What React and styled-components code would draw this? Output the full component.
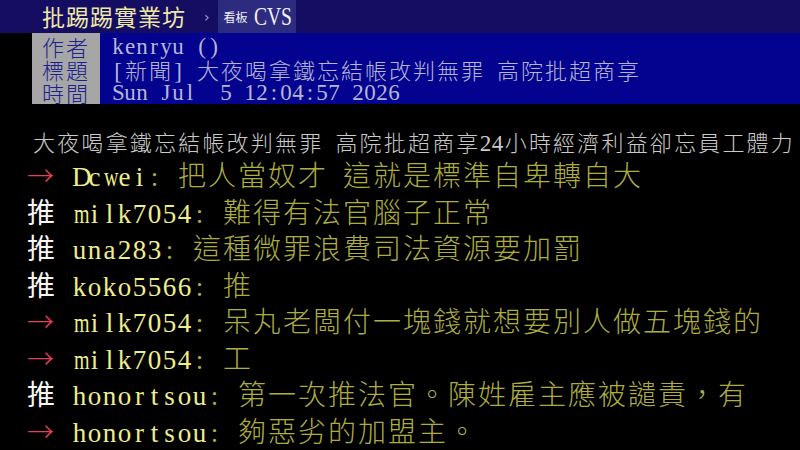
import React from 'react';
import styled, { createGlobalStyle } from 'styled-components';

const CJK = `"Noto Sans CJK TC", "Noto Sans CJK SC", sans-serif`;
const SERIF = `"Liberation Serif", "Noto Sans CJK TC", serif`;

const GlobalStyle = createGlobalStyle`
  html, body {
    margin: 0;
    padding: 0;
    background: #000;
  }
`;

const Page = styled.div`
  width: 800px;
  height: 450px;
  overflow: hidden;
  background: #000;
`;

const TopBar = styled.div`
  display: flex;
  align-items: center;
  height: 33px;
  padding-left: 42px;
  background: #140d62;
`;

const SiteName = styled.div`
  font-family: ${CJK};
  font-size: 23px;
  letter-spacing: 1px;
  line-height: 33px;
  color: #eee9a2;
`;

const Crumb = styled.span`
  margin: 0 8px 0 18px;
  font-family: "DejaVu Sans", sans-serif;
  font-size: 14px;
  color: #a4a4c8;
`;

const Board = styled.div`
  display: flex;
  align-items: center;
  gap: 6px;
  height: 33px;
  padding: 0 6px;
  background: #2c2b80;
  color: #f2f2f6;
`;

const BoardLabel = styled.span`
  font-family: ${CJK};
  font-size: 12px;
`;

const BoardName = styled.span`
  display: inline-block;
  font-family: ${SERIF};
  font-size: 25px;
  transform: scaleX(0.78);
  transform-origin: left center;
  width: 36px;
`;

const Header = styled.div`
  display: flex;
  height: 71px;
  padding-left: 32px;
`;

const Labels = styled.div`
  width: 68px;
  padding: 2px 0 0 10px;
  box-sizing: border-box;
  background: #a6a6a6;
`;

const Label = styled.div`
  height: 23px;
  line-height: 23px;
  font-family: ${CJK};
  font-size: 22px;
  font-weight: 300;
  letter-spacing: 2px;
  color: #1f1f8e;
`;

const Values = styled.div`
  flex: 1;
  padding: 2px 0 0 12px;
  background: #030390;
  color: #b6b6d4;
`;

const ValueRow = styled.div`
  height: 23px;
  line-height: 23px;
  white-space: nowrap;
`;

const Cell = styled.span`
  display: inline-block;
  width: ${p => p.$w}px;
  text-align: center;
  font-family: ${p => (p.$wide ? CJK : SERIF)};
  font-size: ${p => p.$size}px;
  font-weight: ${p => (p.$wide ? 300 : 400)};
  transform: scaleX(${p => (p.$squeeze ? 0.74 : 1)});
`;

const TitleLine = styled.div`
  margin-top: 22px;
  padding-left: 32px;
  height: 30px;
  line-height: 30px;
  white-space: nowrap;
  color: #cacaca;
`;

const PushRow = styled.div`
  height: 36.5px;
  line-height: 36.5px;
  padding-left: 27px;
  white-space: nowrap;
`;

const Tag = styled.span`
  display: inline-block;
  width: 45px;
  font-family: ${CJK};
  font-size: ${p => (p.$arrow ? 27 : 28)}px;
  font-weight: ${p => (p.$arrow ? 300 : 400)};
  color: ${p => (p.$arrow ? '#e2405c' : '#f6f6f6')};
`;

const UserId = styled.span`
  color: #eeee8c;
`;

const Content = styled.span`
  color: #adad40;
`;

const broad = new Set(['m', 'w', 'M', 'W']);

// one terminal cell per character: full-width glyphs take two half cells,
// broad latin letters are narrowed to stay inside theirs
const Term = ({ text, cell, cjk, ascii }) =>
  [...text].map((ch, i) => {
    const wide = ch.charCodeAt(0) > 0x2e7f;
    return (
      <Cell
        key={i}
        $w={wide ? cell * 2 : cell}
        $wide={wide}
        $size={wide ? cjk : ascii}
        $squeeze={broad.has(ch)}
      >
        {ch === ' ' ? '\u00a0' : ch}
      </Cell>
    );
  });

const meta = [
  ['作者', 'kenryu ()'],
  ['標題', '[新聞] 大夜喝拿鐵忘結帳改判無罪 高院批超商享'],
  ['時間', 'Sun Jul  5 12:04:57 2026'],
];

const pushes = [
  { tag: '→', id: 'Dcwei', text: '把人當奴才 這就是標準自卑轉自大' },
  { tag: '推', id: 'milk7054', text: '難得有法官腦子正常' },
  { tag: '推', id: 'una283', text: '這種微罪浪費司法資源要加罰' },
  { tag: '推', id: 'koko5566', text: '推' },
  { tag: '→', id: 'milk7054', text: '呆丸老闆付一塊錢就想要別人做五塊錢的' },
  { tag: '→', id: 'milk7054', text: '工' },
  { tag: '推', id: 'honortsou', text: '第一次推法官。陳姓雇主應被譴責，有' },
  { tag: '→', id: 'honortsou', text: '夠惡劣的加盟主。' },
];

export default function App() {
  return (
    <Page>
      <GlobalStyle />
      <TopBar>
        <SiteName>批踢踢實業坊</SiteName>
        <Crumb>›</Crumb>
        <Board>
          <BoardLabel>看板</BoardLabel>
          <BoardName>CVS</BoardName>
        </Board>
      </TopBar>

      <Header>
        <Labels>
          {meta.map(([k]) => (
            <Label key={k}>{k}</Label>
          ))}
        </Labels>
        <Values>
          {meta.map(([k, v]) => (
            <ValueRow key={k}>
              <Term text={v} cell={12} cjk={22} ascii={23} />
            </ValueRow>
          ))}
        </Values>
      </Header>

      <TitleLine>
        <Term
          text="大夜喝拿鐵忘結帳改判無罪 高院批超商享24小時經濟利益卻忘員工體力"
          cell={12.1}
          cjk={22}
          ascii={23}
        />
      </TitleLine>

      {pushes.map((p, i) => (
        <PushRow key={i}>
          <Tag $arrow={p.tag === '→'}>{p.tag}</Tag>
          <UserId>
            <Term text={p.id} cell={15} cjk={28} ascii={27} />
          </UserId>
          <Content>
            <Term text={': ' + p.text} cell={15} cjk={28} ascii={27} />
          </Content>
        </PushRow>
      ))}
    </Page>
  );
}
